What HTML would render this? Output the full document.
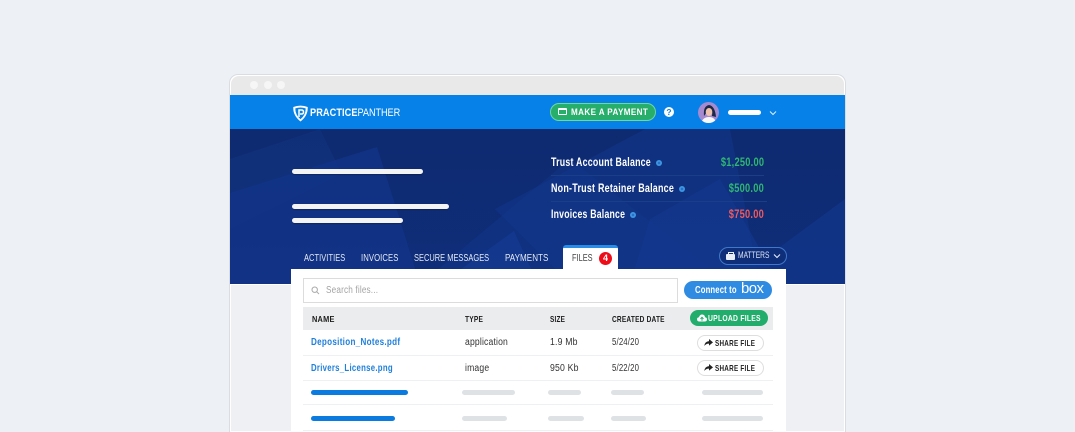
<!DOCTYPE html>
<html><head><meta charset="utf-8">
<style>
html,body{margin:0;padding:0}
body{width:1075px;height:431px;overflow:hidden;background:#edf0f5;position:relative;font-family:"Liberation Sans",sans-serif}
div,span{position:absolute;white-space:nowrap}
.w{background:#f4f4f4;height:5px;border-radius:3px;box-shadow:0 1px 1px rgba(0,0,0,.25)}
.t{transform-origin:left center}
.lb{color:#fff;font-weight:bold;font-size:11.6px;letter-spacing:.3px;line-height:14px;transform-origin:left center}
.val{font-weight:bold;font-size:11.6px;letter-spacing:.3px;line-height:14px;text-align:right;right:311px;transform-origin:right center;transform:scaleX(.8)}
.i{width:6px;height:6px;border-radius:50%;background:radial-gradient(circle,#2a6fc4 0 1px,#3e96e4 1.5px)}
.tab{color:#e3e9f4;font-size:10px;line-height:12px;top:253px;transform-origin:left center}
.th{color:#1c1c1c;font-weight:bold;font-size:8.3px;line-height:10px;top:314px;letter-spacing:.25px;transform-origin:left center}
.td{color:#333;font-size:10px;line-height:12px;letter-spacing:.2px;transform-origin:left center}
.fn{color:#1f7fdc;font-weight:bold;font-size:10px;line-height:12px;letter-spacing:.35px;left:311px;transform-origin:left center}
.sh{left:697px;width:65px;height:14px;border:1px solid #dedede;border-radius:8px;background:#fff}
.sh b{position:absolute;left:17px;top:3px;font-size:8.2px;line-height:10px;color:#222;letter-spacing:.35px;transform-origin:left center;transform:scaleX(.77);white-space:nowrap}
.g{height:5px;background:#dfe2e5;border-radius:3px}
.ln{left:303px;width:470px;height:1px;background:#eff0f2}
</style></head><body>
<div style="left:229px;top:74px;width:615px;height:357px;border:1px solid #d9dce2;border-bottom:0;border-radius:9px 9px 0 0;background:#fff"></div>
<div style="left:231px;top:76px;width:613px;height:19px;background:#e9e9e9;border-radius:8px 8px 0 0"></div>
<div style="left:250px;top:81px;width:8px;height:8px;border-radius:50%;background:#f6f6f6"></div>
<div style="left:264px;top:81px;width:8px;height:8px;border-radius:50%;background:#f6f6f6"></div>
<div style="left:277px;top:81px;width:8px;height:8px;border-radius:50%;background:#f6f6f6"></div>
<div style="left:231px;top:285px;width:613px;height:146px;background:#eef0f4"></div>

<!-- navy -->
<svg style="position:absolute;left:230px;top:129px" width="615" height="155" viewBox="0 0 615 155">
<defs><linearGradient id="n" x1="0" y1="0" x2="0" y2="1"><stop offset="0" stop-color="#0e2a70"/><stop offset="1" stop-color="#0f2e7a"/></linearGradient></defs>
<rect width="615" height="155" fill="url(#n)"/>
<polygon points="0,30 90,0 112,45 0,100" fill="#12337f" opacity=".6"/>
<polygon points="0,64 147,18 190,155 0,155" fill="#12358a" opacity=".7"/>
<polygon points="190,155 340,30 500,155" fill="#12358a" opacity=".5"/>
<polygon points="224,145 284,102 308,155 224,155" fill="#14398f" opacity=".8"/>
<polygon points="265,80 415,0 500,0 530,155 340,155" fill="#12368a" opacity=".55"/>
<polygon points="420,90 490,50 550,155 400,155" fill="#14398f" opacity=".6"/>
<polygon points="500,155 615,70 615,155" fill="#12368a" opacity=".7"/>
</svg>
<!-- header -->
<div style="left:230px;top:95px;width:615px;height:34px;background:#0681e8"></div>

<!-- logo -->
<svg style="position:absolute;left:293px;top:105px" width="15" height="17" viewBox="0 0 15 17"><path d="M0.3 2Q7.5-0.8 14.7 2Q15.2 10.5 7.5 16.5Q-0.2 10.5 0.3 2Z" fill="#fff"/><path d="M2.3 3.4Q7.5 1.6 12.7 3.4Q12.8 9.8 7.5 14.2Q2.2 9.8 2.3 3.4Z" fill="#0681e8"/><path d="M6 12V5H8.5Q10.5 5 10.5 7Q10.5 9 8.5 9H7" fill="none" stroke="#fff" stroke-width="1.5"/></svg>
<div class="t" style="left:310px;top:107px;color:#fff;font-size:11.2px;line-height:13px;font-weight:bold;letter-spacing:.1px;transform:scaleX(.82)">PRACTICE<span style="position:static;font-weight:normal;letter-spacing:-.1px">PANTHER</span></div>

<!-- payment -->
<div style="left:550px;top:103px;width:104px;height:16px;border:1px solid #6fd7a0;border-radius:9px;background:#27ae6b"></div>
<div style="left:558px;top:108px;width:9px;height:7px;border:1px solid #fff;border-radius:1px;box-sizing:border-box;border-top-width:2px"></div>
<div class="t" style="left:571px;top:106px;color:#fff;font-weight:bold;font-size:8.8px;line-height:12px;letter-spacing:.42px;transform:scaleX(.92)">MAKE A PAYMENT</div>
<div style="left:664px;top:107px;width:10px;height:10px;border-radius:50%;background:#fff;color:#0681e8;font-size:8.5px;font-weight:bold;text-align:center;line-height:10px">?</div>

<!-- avatar -->
<svg style="position:absolute;left:698px;top:102px" width="21" height="21" viewBox="0 0 21 21"><defs><clipPath id="c"><circle cx="10.5" cy="10.5" r="10.5"/></clipPath></defs><g clip-path="url(#c)"><rect width="21" height="21" fill="#a58ad0"/><path d="M6 14Q5 4 11 3Q17 4 18 15L14 14Q15 8 11 7Z" fill="#1d2747"/><ellipse cx="11" cy="10" rx="3.3" ry="4" fill="#eec2ac"/><path d="M3 21Q5 15 11 15Q17 15 18 21Z" fill="#f8f8f8"/></g></svg>
<div style="left:728px;top:110px;width:33px;height:5px;border-radius:3px;background:#fff"></div>
<svg style="position:absolute;left:769px;top:110px" width="8" height="6" viewBox="0 0 8 6"><path d="M1 1.5L4 4.5L7 1.5" fill="none" stroke="#dfefff" stroke-width="1"/></svg>

<!-- left bars -->
<div class="w" style="left:292px;top:169px;width:131px"></div>
<div class="w" style="left:292px;top:204px;width:157px"></div>
<div class="w" style="left:292px;top:218px;width:111px"></div>

<!-- balances -->
<div class="lb" style="left:551px;top:156px;transform:scaleX(.76)">Trust Account Balance</div>
<div class="i" style="left:656px;top:160px"></div>
<div class="val" style="top:156px;color:#2fb673">$1,250.00</div>
<div style="left:551px;top:175px;width:213px;height:1px;background:#1b3f86"></div>
<div class="lb" style="left:551px;top:182px;transform:scaleX(.77)">Non-Trust Retainer Balance</div>
<div class="i" style="left:679px;top:186px"></div>
<div class="val" style="top:182px;color:#2fb673">$500.00</div>
<div style="left:551px;top:201px;width:216px;height:1px;background:#1b3f86"></div>
<div class="lb" style="left:551px;top:208px;transform:scaleX(.75)">Invoices Balance</div>
<div class="i" style="left:630px;top:212px"></div>
<div class="val" style="top:208px;color:#ee5a5f">$750.00</div>

<!-- tabs -->
<div class="tab" style="left:304px;letter-spacing:.1px;transform:scaleX(.745)">ACTIVITIES</div>
<div class="tab" style="left:361px;letter-spacing:.1px;transform:scaleX(.77)">INVOICES</div>
<div class="tab" style="left:414px;letter-spacing:.02px;transform:scaleX(.745)">SECURE MESSAGES</div>
<div class="tab" style="left:505px;letter-spacing:.05px;transform:scaleX(.805)">PAYMENTS</div>

<div style="left:719px;top:247px;width:66px;height:16px;border:1px solid #3f78c9;border-radius:9px;background:#0f2e79"></div>
<div style="left:726px;top:254px;width:9px;height:6px;background:#e8eef8;border-radius:1px"></div>
<div style="left:728px;top:252px;width:4px;height:1px;border:1px solid #e8eef8;border-bottom:0"></div>
<div class="t" style="left:738px;top:250px;color:#dbe5f6;font-size:8.8px;line-height:11px;transform:scaleX(.76)">MATTERS</div>
<svg style="position:absolute;left:773px;top:253px" width="8" height="6" viewBox="0 0 8 6"><path d="M1 1.5L4 4.5L7 1.5" fill="none" stroke="#e8eef8" stroke-width="1.1"/></svg>

<!-- card -->
<div style="left:291px;top:269px;width:495px;height:162px;background:#fff"></div>
<div style="left:563px;top:246px;width:55px;height:23px;background:#fff;border-radius:3px 3px 0 0"></div>
<div style="left:563px;top:245px;width:55px;height:3px;background:#2b8ce6;border-radius:3px 3px 0 0"></div>
<div class="t" style="left:572px;top:253px;color:#444;font-size:10px;line-height:12px;transform:scaleX(.74)">FILES</div>
<div style="left:599px;top:252px;width:13px;height:13px;border-radius:50%;background:#ee0c18;color:#fff;font-size:9px;font-weight:bold;line-height:13px;text-align:center">4</div>

<!-- search -->
<div style="left:303px;top:278px;width:373px;height:23px;border:1px solid #dcdcdc;background:#fff"></div>
<svg style="position:absolute;left:311px;top:286px" width="9" height="9" viewBox="0 0 9 9"><circle cx="3.7" cy="3.7" r="2.7" fill="none" stroke="#aaa" stroke-width="1"/><path d="M5.8 5.8L8 8" stroke="#aaa"/></svg>
<div class="t" style="left:326px;top:285px;color:#a4a4a4;font-size:10px;line-height:12px;letter-spacing:.2px;transform:scaleX(.82)">Search files...</div>

<div style="left:684px;top:281px;width:88px;height:18px;border-radius:9px;background:#2f8be2"></div>
<div class="t" style="left:695px;top:284px;color:#fff;font-size:10px;font-weight:bold;line-height:13px;letter-spacing:.2px;transform:scaleX(.77)">Connect to</div>
<div class="t" style="left:741px;top:281px;color:#fff;font-size:15px;line-height:16px;letter-spacing:-.6px">box</div>

<!-- table head -->
<div style="left:303px;top:307px;width:470px;height:23px;background:#ebecee"></div>
<div class="th" style="left:312px;transform:scaleX(.89)">NAME</div>
<div class="th" style="left:465px;transform:scaleX(.8)">TYPE</div>
<div class="th" style="left:550px;transform:scaleX(.78)">SIZE</div>
<div class="th" style="left:612px;transform:scaleX(.79)">CREATED DATE</div>
<div style="left:690px;top:310px;width:78px;height:16px;border-radius:8px;background:#23ad6c"></div>
<svg style="position:absolute;left:697px;top:314px" width="10" height="8" viewBox="0 0 10 8"><path d="M2.5 7.5Q0 7.5 0 5.3Q0 3.5 2 3.3Q2.6 .5 5.2 .5Q7.8 .6 8 3.3Q10 3.5 10 5.4Q10 7.5 7.5 7.5Z" fill="#fff"/><path d="M5 6.8V3.5M3.5 4.8L5 3.2L6.5 4.8" fill="none" stroke="#23ad6c"/></svg>
<div class="t" style="left:708px;top:313px;color:#fff;font-weight:bold;font-size:8.3px;line-height:10px;letter-spacing:.3px;transform:scaleX(.82)">UPLOAD FILES</div>

<!-- rows -->
<div class="fn" style="top:337px;transform:scaleX(.81)">Deposition_Notes.pdf</div>
<div class="td" style="left:465px;top:337px;transform:scaleX(.86)">application</div>
<div class="td" style="left:550px;top:337px;transform:scaleX(.87)">1.9 Mb</div>
<div class="td" style="left:612px;top:337px;transform:scaleX(.78)">5/24/20</div>
<div class="sh" style="top:335px"><svg style="position:absolute;left:6px;top:3px" width="9" height="8" viewBox="0 0 9 8"><path d="M5 0L9 3.4L5 6.6V4.6Q2 4.5 .3 7Q.6 2.6 5 2.1Z" fill="#222"/></svg><b>SHARE FILE</b></div>
<div class="ln" style="top:355px"></div>

<div class="fn" style="top:363px;transform:scaleX(.78)">Drivers_License.png</div>
<div class="td" style="left:465px;top:363px;transform:scaleX(.86)">image</div>
<div class="td" style="left:550px;top:363px;transform:scaleX(.87)">950 Kb</div>
<div class="td" style="left:612px;top:363px;transform:scaleX(.78)">5/22/20</div>
<div class="sh" style="top:360px"><svg style="position:absolute;left:6px;top:3px" width="9" height="8" viewBox="0 0 9 8"><path d="M5 0L9 3.4L5 6.6V4.6Q2 4.5 .3 7Q.6 2.6 5 2.1Z" fill="#222"/></svg><b>SHARE FILE</b></div>
<div class="ln" style="top:380px"></div>

<div style="left:311px;top:390px;width:97px;height:5px;border-radius:3px;background:#0b7be0"></div>
<div class="g" style="left:462px;top:390px;width:53px"></div>
<div class="g" style="left:548px;top:390px;width:33px"></div>
<div class="g" style="left:611px;top:390px;width:33px"></div>
<div class="g" style="left:702px;top:390px;width:61px"></div>
<div class="ln" style="top:404px"></div>

<div style="left:311px;top:416px;width:84px;height:5px;border-radius:3px;background:#0b7be0"></div>
<div class="g" style="left:462px;top:416px;width:45px"></div>
<div class="g" style="left:548px;top:416px;width:36px"></div>
<div class="g" style="left:611px;top:416px;width:35px"></div>
<div class="g" style="left:702px;top:416px;width:61px"></div>
<div class="ln" style="top:430px"></div>
</body></html>
